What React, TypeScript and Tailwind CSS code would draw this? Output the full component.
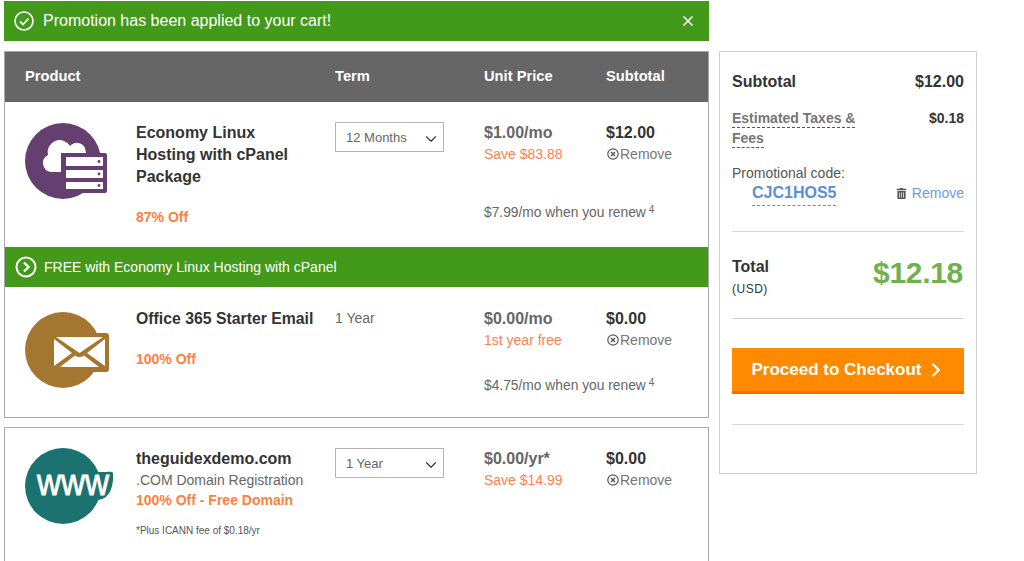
import { ChevronDown, ChevronRight, X } from 'lucide-react';
import { FaTrashAlt } from 'react-icons/fa';

const gridCols = 'grid grid-cols-[111px_199px_149px_122px_1fr] pl-5';

function HostingIcon() {
  return (
    <svg width="84" height="76" viewBox="0 0 84 76" className="mt-px">
      <circle cx="38" cy="38" r="38" fill="#643f70" />
      <path
        d="M26 49a9 9 0 0 1 -3 -17a12 12 0 0 1 22 -9a9 9 0 0 1 15 2l1 5h-25v19z"
        fill="#fff"
      />
      <rect x="38" y="30" width="44" height="40" rx="2" fill="#643f70" />
      <rect x="41" y="34" width="37" height="9" fill="#fff" />
      <rect x="41" y="47" width="37" height="8" fill="#fff" />
      <rect x="41" y="59" width="37" height="7" fill="#fff" />
      <circle cx="74" cy="38.500" r="1.400" fill="#643f70" />
      <circle cx="74" cy="51" r="1.400" fill="#643f70" />
      <circle cx="74" cy="62.500" r="1.400" fill="#643f70" />
    </svg>
  );
}

function MailIcon() {
  return (
    <svg width="86" height="76" viewBox="0 0 86 76" className="mt-[4px]">
      <circle cx="38" cy="38" r="38" fill="#a5762f" />
      <rect x="24" y="21" width="60" height="39" rx="3" fill="#a5762f" />
      <path d="M31 25h47l-23.500 16z" fill="#fff" />
      <path d="M29 27l18 14l-18 13z" fill="#fff" />
      <path d="M80 27v27l-18-13z" fill="#fff" />
      <path d="M35 55l15-11.500c3 2 6 2 9 0l15 11.500z" fill="#fff" />
    </svg>
  );
}

function WwwIcon() {
  return (
    <svg width="105" height="76" viewBox="0 0 105 76">
      <circle cx="38" cy="38" r="38" fill="#1c7270" />
      <path d="M10 24h68c6 0 9-1 10 1c1 12-3 27-16 27h-62z" fill="#1c7270" />
      <text
        x="12"
        y="47"
        fontSize="36"
        fill="#fff"
        stroke="#fff"
        strokeWidth="0.800"
        textLength="72"
        lengthAdjust="spacingAndGlyphs"
      >
        www
      </text>
    </svg>
  );
}

function RemoveLink() {
  return (
    <div className="flex items-center text-[14px] leading-[20px] text-[#767676]">
      <svg width="14" height="14" viewBox="0 0 14 14" className="shrink-0">
        <circle cx="7" cy="7" r="5.200" fill="none" stroke="#555" strokeWidth="1.200" />
        <path d="M5 5l4 4M9 5l-4 4" stroke="#555" strokeWidth="1.400" />
      </svg>
      Remove
    </div>
  );
}

function TermSelect({ label }: { label: string }) {
  return (
    <div className="w-[109px] h-[30px] border border-[#b5b5b5] flex items-center justify-between pl-[10px] pr-[3px] text-[13px] text-[#666]">
      <span className="pt-px">{label}</span>
      <ChevronDown size={18} strokeWidth={1.5} className="text-[#333] mt-1" />
    </div>
  );
}

function Renew({ text }: { text: string }) {
  return (
    <div className="flex items-start text-[13.8px] leading-[20px] text-[#666] whitespace-nowrap">
      {text}
      <span className="text-[10px] leading-[10px] ml-[3px] mt-[2px]">4</span>
    </div>
  );
}

export default function App() {
  return (
    <div className="h-[561px] w-[1024px] overflow-hidden bg-white flex items-start pl-1 pt-px gap-[10px] font-['Liberation_Sans',Arial,sans-serif]">
      <div className="w-[705px] shrink-0">
        <div className="h-[40px] bg-[#439a1a] flex items-center justify-between pl-[10px] pr-[13px] text-white">
          <div className="flex items-center gap-[9px] text-[16px]">
            <svg width="20" height="20" viewBox="0 0 20 20">
              <circle cx="10" cy="10" r="9" fill="none" stroke="#fff" strokeWidth="1.600" />
              <path d="M6 10.500l3 3l5.500-6" fill="none" stroke="#fff" strokeWidth="1.800" />
            </svg>
            Promotion has been applied to your cart!
          </div>
          <X size={16} strokeWidth={2.5} />
        </div>

        <div className="mt-[10px] border border-[#a8a8a8]">
          <div className={`${gridCols} h-[50px] items-center pb-[2px] bg-[#666] text-white text-[14.7px] font-bold`}>
            <div className="col-span-2">Product</div>
            <div>Term</div>
            <div>Unit Price</div>
            <div>Subtotal</div>
          </div>

          <div className={`${gridCols} h-[145px] pt-[20px]`}>
            <HostingIcon />
            <div>
              <div className="text-[16px] leading-[22px] font-bold text-[#333] w-[175px]">
                Economy Linux Hosting with cPanel Package
              </div>
              <div className="text-[14px] font-bold text-[#ff7f3f] mt-[19px]">87% Off</div>
            </div>
            <div>
              <TermSelect label="12 Months" />
            </div>
            <div>
              <div className="text-[16px] leading-[22px] font-bold text-[#666]">$1.00/mo</div>
              <div className="text-[14px] leading-[20px] text-[#ff7f50]">Save $83.88</div>
              <div className="mt-[39px]">
                <Renew text="$7.99/mo when you renew" />
              </div>
            </div>
            <div>
              <div className="text-[16px] leading-[22px] font-bold text-[#333]">$12.00</div>
              <RemoveLink />
            </div>
          </div>

          <div className="h-[40px] bg-[#439a1a] flex items-center gap-[7px] pl-[10px] text-white text-[14px]">
            <svg width="22" height="22" viewBox="0 0 22 22">
              <circle cx="11" cy="11" r="9.500" fill="none" stroke="#fff" strokeWidth="2" />
              <path d="M9 6.500l4.500 4.500l-4.500 4.500" fill="none" stroke="#fff" strokeWidth="2.400" />
            </svg>
            FREE with Economy Linux Hosting with cPanel
          </div>

          <div className={`${gridCols} h-[130px] pt-[21px]`}>
            <MailIcon />
            <div>
              <div className="text-[15.8px] leading-[22px] font-bold text-[#333] whitespace-nowrap">
                Office 365 Starter Email
              </div>
              <div className="text-[14px] font-bold text-[#ff7f3f] mt-[19px]">100% Off</div>
            </div>
            <div className="text-[14px] leading-[22px] text-[#666] -mt-px">1 Year</div>
            <div>
              <div className="text-[16px] leading-[22px] font-bold text-[#666]">$0.00/mo</div>
              <div className="text-[14px] leading-[20px] text-[#ff7f50]">1st year free</div>
              <div className="mt-[26px]">
                <Renew text="$4.75/mo when you renew" />
              </div>
            </div>
            <div>
              <div className="text-[16px] leading-[22px] font-bold text-[#333]">$0.00</div>
              <RemoveLink />
            </div>
          </div>
        </div>

        <div className="mt-[9px] border border-[#a8a8a8] h-[200px]">
          <div className={`${gridCols} pt-[20px]`}>
            <WwwIcon />
            <div>
              <div className="text-[16px] leading-[22px] font-bold text-[#333]">theguidexdemo.com</div>
              <div className="text-[14px] leading-[20px] text-[#666]">.COM Domain Registration</div>
              <div className="text-[14px] leading-[16px] mt-[2px] font-bold text-[#ff7f3f]">100% Off - Free Domain</div>
              <div className="text-[10px] leading-[14px] text-[#555] mt-[16px]">*Plus ICANN fee of $0.18/yr</div>
            </div>
            <div>
              <TermSelect label="1 Year" />
            </div>
            <div>
              <div className="text-[16px] leading-[22px] font-bold text-[#666]">$0.00/yr*</div>
              <div className="text-[14px] leading-[20px] text-[#ff7f50]">Save $14.99</div>
            </div>
            <div>
              <div className="text-[16px] leading-[22px] font-bold text-[#333]">$0.00</div>
              <RemoveLink />
            </div>
          </div>
        </div>
      </div>

      <div className="mt-[50px] w-[258px] h-[423px] shrink-0 border border-[#cfcfcf] px-[12px]">
        <div className="flex justify-between items-center pt-[20px] text-[16px] leading-[20px] font-bold text-[#333]">
          <span>Subtotal</span>
          <span>$12.00</span>
        </div>
        <div className="flex justify-between mt-[16px]">
          <div className="w-[130px] text-[14px] leading-[20px] font-bold text-[#767676]">
            <span className="border-b border-dashed border-[#555] pb-px">Estimated Taxes &amp; Fees</span>
          </div>
          <span className="text-[14px] leading-[20px] font-bold text-[#333]">$0.18</span>
        </div>
        <div className="text-[14px] leading-[20px] text-[#555] mt-[15px]">Promotional code:</div>
        <div className="flex items-start justify-between">
          <span className="ml-[20px] text-[16px] leading-[20px] font-bold text-[#5b8fd8] border-b border-dashed border-[#5b8fd8] pb-[2px]">
            CJC1HOS5
          </span>
          <span className="flex items-center gap-[5px] text-[14px] leading-[20px] text-[#6e9ae0]">
            <FaTrashAlt size={11} className="text-[#555]" />
            Remove
          </span>
        </div>
        <div className="border-t border-[#d4d4d4] mt-[25px]" />
        <div className="flex justify-between h-[87px] pt-[25px] border-b border-[#d4d4d4]">
          <div>
            <div className="text-[16px] leading-[20px] font-bold text-[#333]">Total</div>
            <div className="text-[12px] leading-[20px] text-[#333] tracking-[0.5px] mt-[2px]">(USD)</div>
          </div>
          <div className="text-[30px] leading-[34px] font-bold tracking-[-0.3px] text-[#72b04e] mt-[-1px] mr-px">$12.18</div>
        </div>
        <div className="mt-[29px] h-[46px] bg-[#ff8a00] border-b-[3px] border-[#ff6a00] flex items-center justify-center pl-[2px] gap-[3px] text-white text-[17px] font-bold">
          Proceed to Checkout
          <ChevronRight size={22} strokeWidth={2.5} />
        </div>
        <div className="border-t border-[#d4d4d4] mt-[30px]" />
      </div>
    </div>
  );
}
